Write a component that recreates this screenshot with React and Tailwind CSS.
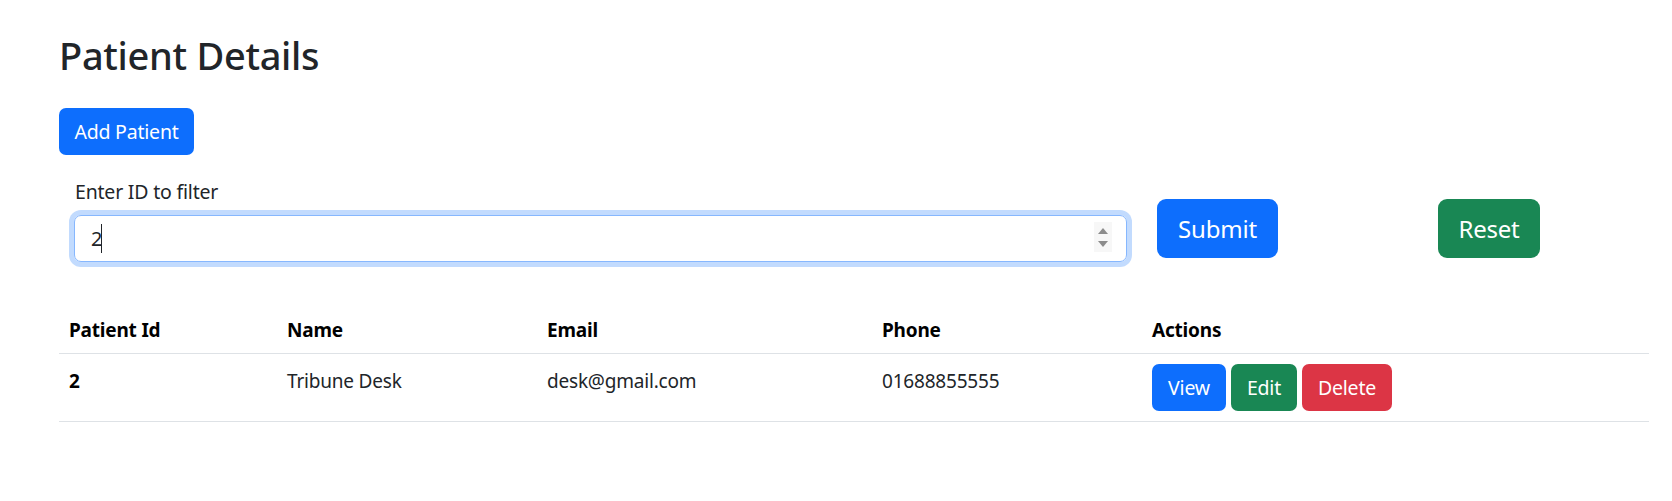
import { useState } from 'react';

const font = { fontFamily: '"Noto Sans", "Open Sans", sans-serif' };

const patients = [
  { id: 2, name: 'Tribune Desk', email: 'desk@gmail.com', phone: '01688855555' },
];

function Spinner() {
  return (
    <div className="absolute right-[15px] top-[7px] w-[18px] h-[30px] bg-[#f7f7f7] flex flex-col items-center justify-center gap-[7px]">
      <svg width="10" height="6" viewBox="0 0 10 6"><path d="M5 0 L10 6 L0 6 Z" fill="#8c8c8c" /></svg>
      <svg width="10" height="6" viewBox="0 0 10 6"><path d="M0 0 L10 0 L5 6 Z" fill="#8c8c8c" /></svg>
    </div>
  );
}

export default function App() {
  const [filter, setFilter] = useState('2');

  return (
    <div className="min-h-screen bg-white text-[#212529] pl-[59px] pt-[31px]" style={font}>
      <h2 className="text-[38px] leading-[48px] font-medium tracking-[-0.3px]">Patient Details</h2>

      <button className="mt-[29px] w-[135px] h-[47px] rounded-[7px] bg-[#0d6efd] text-white text-[19.5px] leading-[30px] tracking-[-0.2px]">
        Add Patient
      </button>

      {/* Filter */}
      <div className="flex items-start mt-[22px]">
        <div className="ml-[15px] w-[1053px]">
          <label className="block text-[19.5px] leading-[30px] mb-[8px] pl-[1px] tracking-[-0.2px]">Enter ID to filter</label>
          <div className="relative">
            <input
              value={filter}
              onChange={(e) => setFilter(e.target.value)}
              className="w-full h-[47px] rounded-[7px] border border-[#86b7fe] px-[16px] text-[20px] outline-none shadow-[0_0_0_5px_rgba(13,110,253,0.25)]"
              style={font}
            />
            <span className="absolute left-[27px] top-[9px] w-px h-[29px] bg-[#212529]"></span>
            <Spinner />
          </div>
        </div>
        <button className="ml-[30px] mt-[22px] w-[121px] h-[59px] rounded-[9px] bg-[#0d6efd] text-white text-[24px] tracking-[-0.2px]">
          Submit
        </button>
        <button className="ml-[160px] mt-[22px] w-[102px] h-[59px] rounded-[9px] bg-[#198754] text-white text-[24px] tracking-[-0.2px]">
          Reset
        </button>
      </div>

      {/* Table */}
      <table className="mt-[41px] w-[1590px] table-fixed border-collapse text-[19px] leading-[30px] tracking-[-0.2px]">
        <colgroup>
          <col className="w-[218px]" />
          <col className="w-[260px]" />
          <col className="w-[335px]" />
          <col className="w-[270px]" />
          <col />
        </colgroup>
        <thead>
          <tr className="border-b border-[#dee2e6]">
            <th className="text-left font-bold pt-[12px] pb-[8px] px-[10px] text-black">Patient Id</th>
            <th className="text-left font-bold pt-[12px] pb-[8px] px-[10px] text-black">Name</th>
            <th className="text-left font-bold pt-[12px] pb-[8px] px-[10px] text-black">Email</th>
            <th className="text-left font-bold pt-[12px] pb-[8px] px-[10px] text-black">Phone</th>
            <th className="text-left font-bold pt-[12px] pb-[8px] px-[10px] text-black">Actions</th>
          </tr>
        </thead>
        <tbody>
          {patients.map((p) => (
            <tr key={p.id} className="border-b border-[#dee2e6] align-top">
              <th className="text-left font-bold pt-[12px] px-[10px] text-black">{p.id}</th>
              <td className="pt-[12px] px-[10px]">{p.name}</td>
              <td className="pt-[12px] px-[10px]">{p.email}</td>
              <td className="pt-[12px] px-[10px]">{p.phone}</td>
              <td className="p-[10px]">
                <div className="flex gap-[5px] text-[19.5px]">
                  <button className="w-[74px] h-[47px] rounded-[7px] bg-[#0d6efd] text-white">View</button>
                  <button className="w-[66px] h-[47px] rounded-[7px] bg-[#198754] text-white">Edit</button>
                  <button className="w-[90px] h-[47px] rounded-[7px] bg-[#dc3545] text-white">Delete</button>
                </div>
              </td>
            </tr>
          ))}
        </tbody>
      </table>
    </div>
  );
}
